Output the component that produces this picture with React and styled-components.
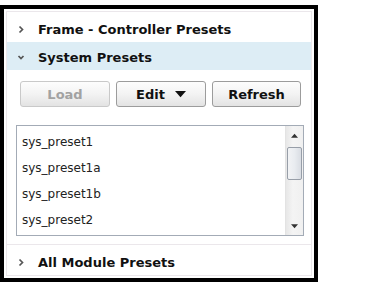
import styled, { createGlobalStyle } from "styled-components";

const GlobalStyle = createGlobalStyle`
  html, body {
    margin: 0;
    padding: 0;
    background: #fff;
  }
  body {
    font-family: "DejaVu Sans", Verdana, sans-serif;
  }
`;

const Frame = styled.div`
  box-sizing: border-box;
  margin-top: 5px;
  width: 318px;
  height: 277px;
  border: 4px solid #000;
  padding: 2px;
  background: #fff;
`;

const Panel = styled.div`
  box-sizing: border-box;
  height: 100%;
  border: 1px solid #ebe7eb;
  display: flex;
  flex-direction: column;
`;

const Header = styled.div`
  box-sizing: border-box;
  display: flex;
  align-items: center;
  gap: 13px;
  height: ${(p) => p.$h}px;
  flex: ${(p) => (p.$fill ? 1 : "none")};
  padding: ${(p) => p.$pt || 0}px 0 0 10px;
  background: ${(p) => (p.$open ? "#ddedf5" : "#fff")};
  border-top: ${(p) => (p.$divider ? "1px solid #ebe7eb" : "none")};
  font-size: 13px;
  font-weight: bold;
  color: #111;
`;

const Content = styled.div`
  display: flex;
  flex-direction: column;
  padding: 11px 0 8px;
`;

const Buttons = styled.div`
  display: grid;
  grid-template-columns: 90px 90px 89px;
  gap: 6px;
  padding-left: 13px;
`;

const Button = styled.div`
  box-sizing: border-box;
  height: 26px;
  display: flex;
  align-items: center;
  justify-content: center;
  gap: 10px;
  border: 1px solid ${(p) => (p.$disabled ? "#c9c9c9" : "#9c9c9c")};
  border-radius: 3px;
  background: linear-gradient(#fdfdfd, #f3f3f3 50%, #e3e3e3);
  color: ${(p) => (p.$disabled ? "#a2a2a2" : "#111")};
  font-size: 13px;
  font-weight: bold;
`;

const List = styled.div`
  box-sizing: border-box;
  margin: 18px 0 0 9px;
  width: 288px;
  height: 111px;
  border: 1px solid #a3abb6;
  display: flex;
`;

const Items = styled.div`
  flex: 1;
  padding-top: 3px;
`;

const Item = styled.div`
  height: 26px;
  display: flex;
  align-items: center;
  padding-left: 5px;
  font-size: 12px;
  color: #222;
`;

const Scrollbar = styled.div`
  width: 17px;
  display: flex;
  flex-direction: column;
  border-left: 1px solid #e3e3e3;
  background: linear-gradient(90deg, #e7e7e7, #f4f4f4 40%, #f0f0f0);
`;

const ArrowBox = styled.div`
  height: 18px;
  display: flex;
  align-items: center;
  justify-content: center;
`;

const Track = styled.div`
  flex: 1;
  display: flex;
  flex-direction: column;
  padding-top: 3px;
`;

const Thumb = styled.div`
  box-sizing: border-box;
  height: 33px;
  margin: 0 1px;
  border: 1px solid #979ea8;
  border-radius: 2px;
  background: linear-gradient(90deg, #f2f3f5, #e9ecf0 50%, #d9dde3);
`;

const Chevron = ({ down }) => (
  <svg width="8" height="9" viewBox="0 0 8 9">
    <path
      d={down ? "M1.5 3 L4 5.5 L6.5 3" : "M2.5 1.5 L5.5 4.5 L2.5 7.5"}
      fill="none"
      stroke="#555"
      strokeWidth="1.7"
    />
  </svg>
);

const Tri = ({ up, size = 7, color = "#333" }) => (
  <svg width={size} height={Math.ceil(size / 2) + 1} viewBox="0 0 8 5">
    <path d={up ? "M0 5 L4 0.5 L8 5 Z" : "M0 0 L8 0 L4 4.5 Z"} fill={color} />
  </svg>
);

export default function App() {
  const presets = ["sys_preset1", "sys_preset1a", "sys_preset1b", "sys_preset2"];
  return (
    <>
      <GlobalStyle />
      <Frame>
        <Panel>
          <Header $h={30} $pt={5}>
            <Chevron />
            Frame - Controller Presets
          </Header>
          <Header $h={28} $pt={3} $open>
            <Chevron down />
            System Presets
          </Header>
          <Content>
            <Buttons>
              <Button $disabled>Load</Button>
              <Button>
                Edit <Tri size={11} color="#111" />
              </Button>
              <Button>Refresh</Button>
            </Buttons>
            <List>
              <Items>
                {presets.map((p) => (
                  <Item key={p}>{p}</Item>
                ))}
              </Items>
              <Scrollbar>
                <ArrowBox>
                  <Tri up />
                </ArrowBox>
                <Track>
                  <Thumb />
                </Track>
                <ArrowBox>
                  <Tri />
                </ArrowBox>
              </Scrollbar>
            </List>
          </Content>
          <Header $fill $pt={4} $divider>
            <Chevron />
            All Module Presets
          </Header>
        </Panel>
      </Frame>
    </>
  );
}
